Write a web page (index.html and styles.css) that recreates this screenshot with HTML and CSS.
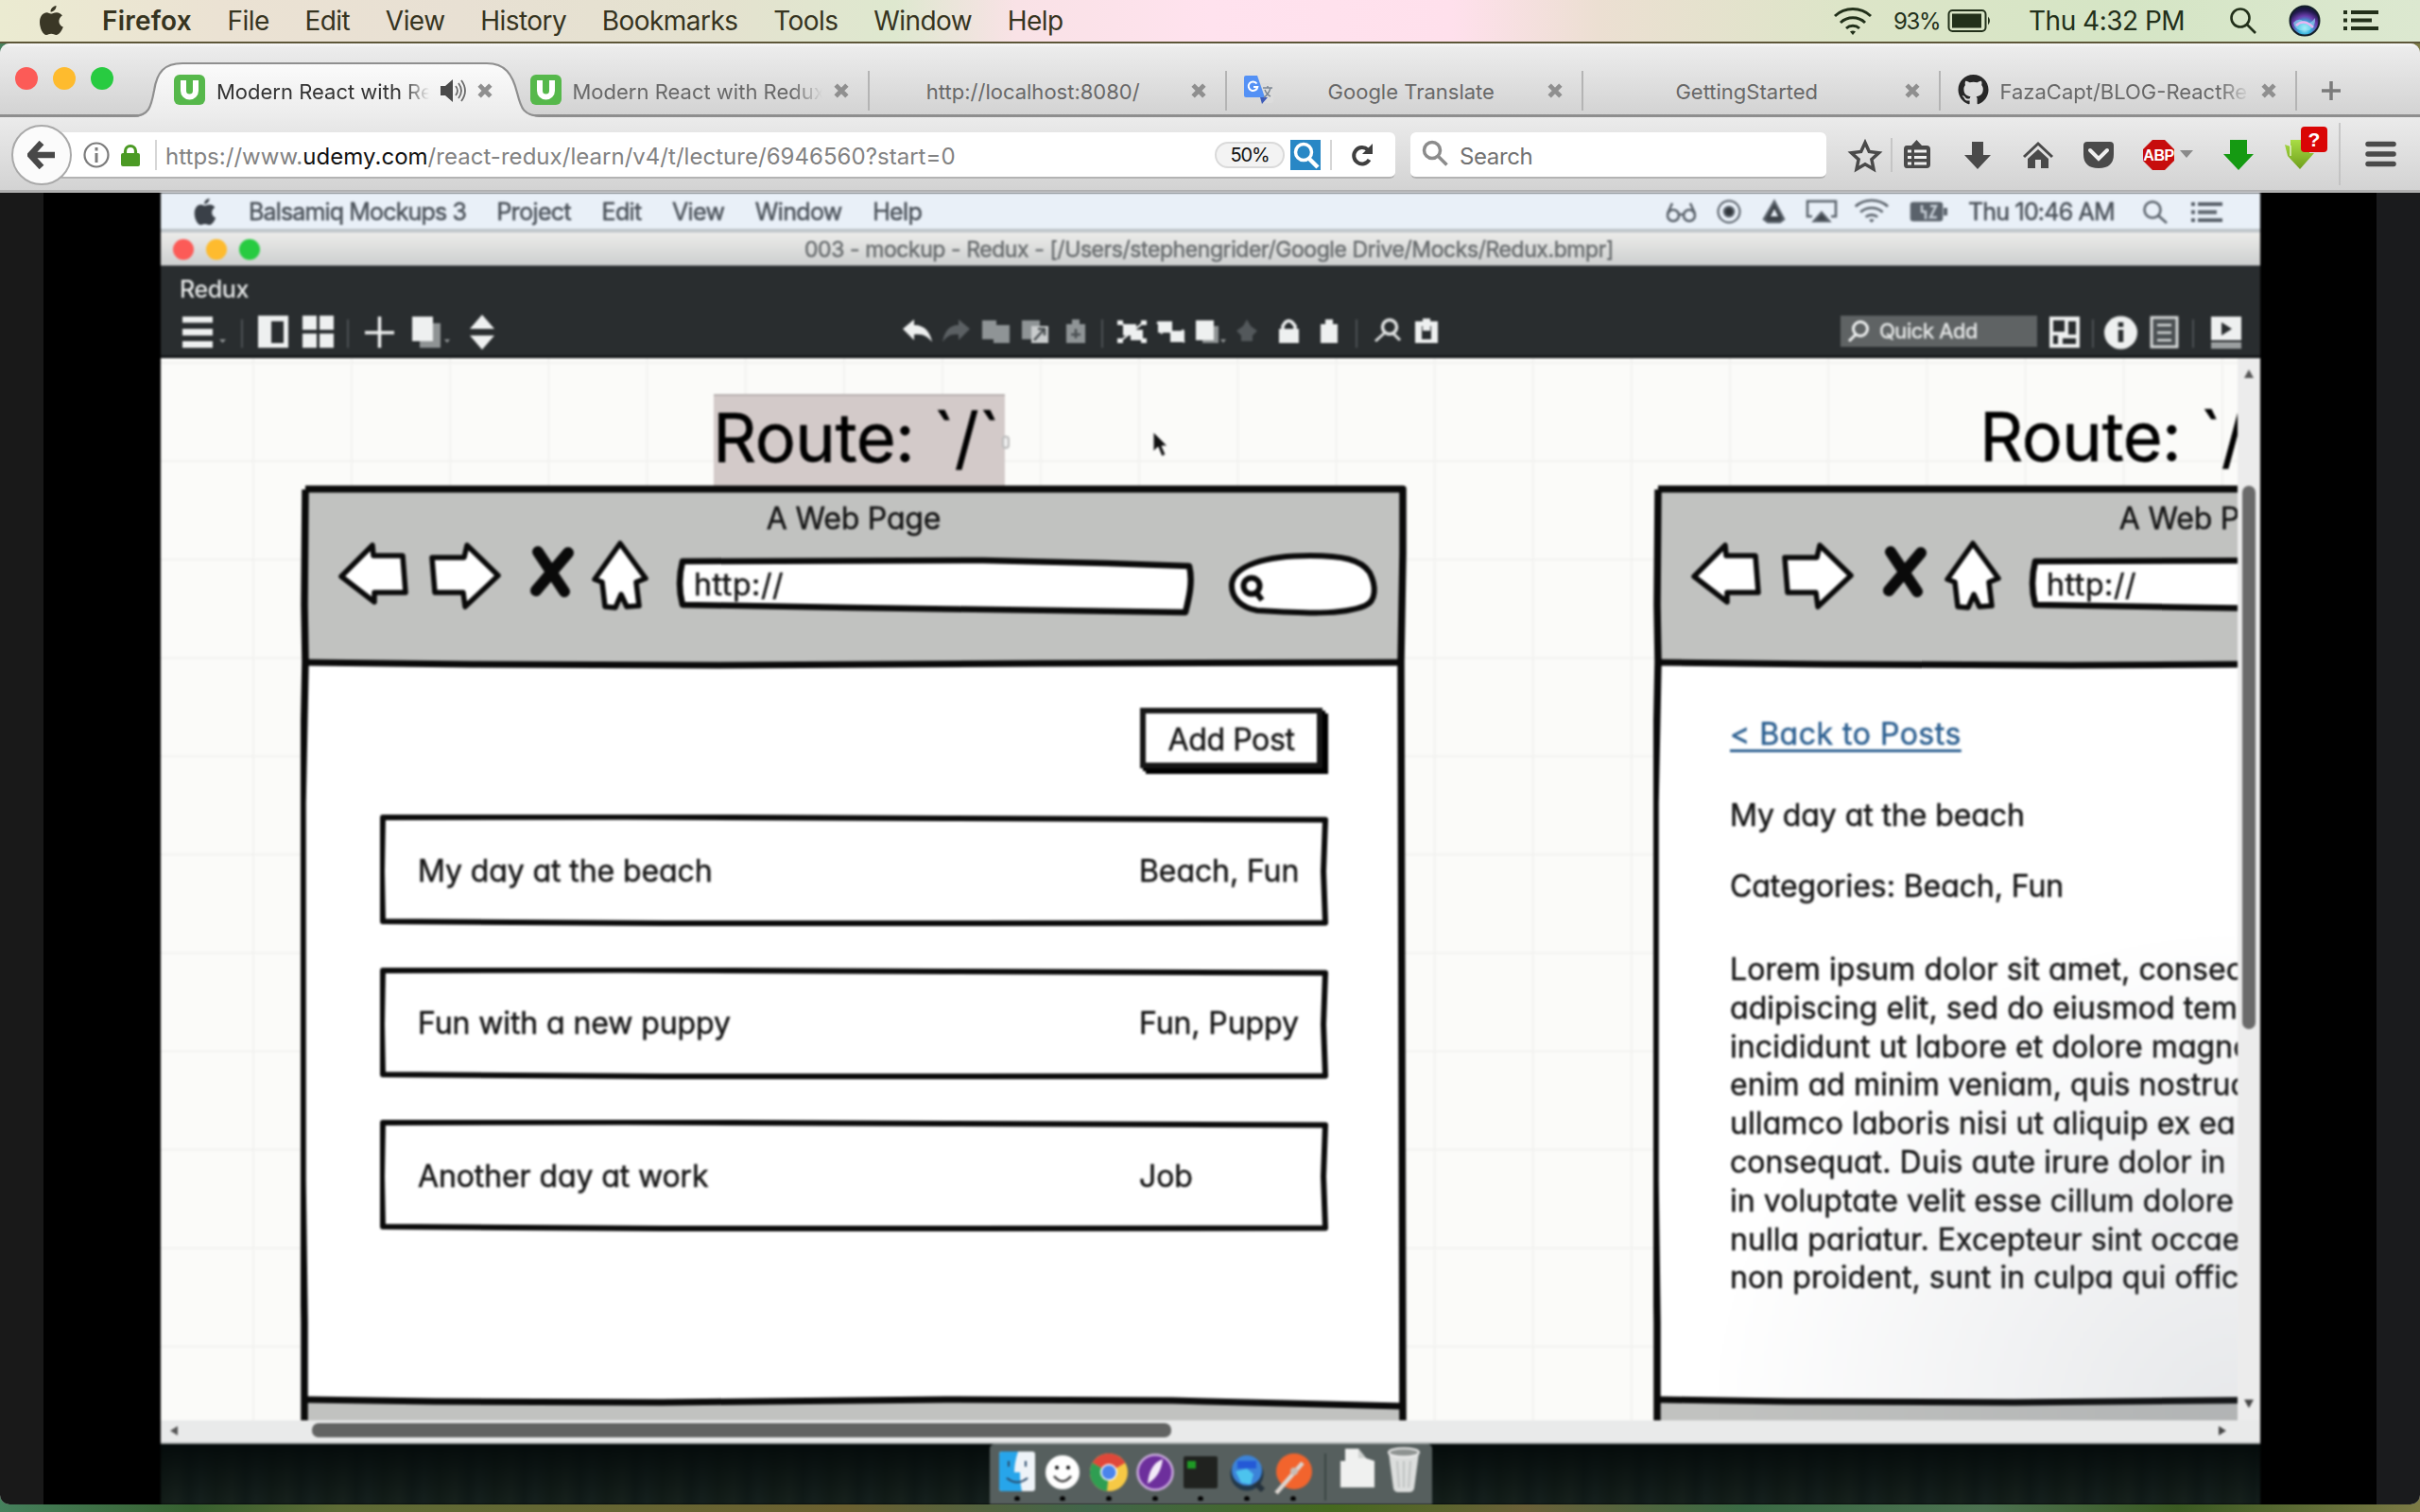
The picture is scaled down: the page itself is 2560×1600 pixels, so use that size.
FILE: index.html
```html
<!DOCTYPE html>
<html lang="en">
<head>
<meta charset="utf-8">
<title>Modern React with Redux</title>
<link rel="stylesheet" href="styles.css">
</head>
<body>
<svg class="defs" aria-hidden="true">
  <defs>
    <path id="apple" d="M17.5 0c.4 3-2.600 6.600-6 6.600C11.200 3.500 14.200.5 17.500 0zM11.600 8.600c1.700 0 3.300-1.400 6.300-1.400 2.600 0 4.700 1.300 6 3.200-5.200 3.100-4.300 10.100.9 12.200-1.600 4.500-4.600 8.400-7.300 8.400-2 0-2.900-1.200-5.300-1.200-2.400 0-3.300 1.200-5.200 1.200C3.700 31 0 24 0 17.500 0 10.800 4 7.300 7.500 7.300c1.800 0 3.200 1.300 4.100 1.300z"/>
    <path id="close" d="M2 2l11 11M13 2L2 13" fill="none" stroke="#8f8f8f" stroke-width="4.500"/>
    <g id="udemy">
      <rect width="33" height="32" rx="6" fill="#56b84b"/>
      <path d="M10 6v11a6.500 6.500 0 0 0 13 0V6" fill="none" stroke="#fff" stroke-width="6"/>
    </g>
    <g id="wifi" fill="none" stroke="currentColor">
      <path d="M2 11a28 28 0 0 1 38 0M8 18a19 19 0 0 1 26 0M14 24a10.500 10.500 0 0 1 14 0" stroke-width="3"/>
      <path d="M18 27.500a5 5 0 0 1 6 0L21 31z" fill="currentColor" stroke="none"/>
    </g>
    <g id="card-sketch" fill="#fff" stroke="#0b0b0b" stroke-width="6" stroke-linejoin="round">
      <path d="M3 3L260 2.500 600 4 1000 5.500 998 60 1000 114.500 620 115 300 115 3 113 2 60z"/>
    </g>
    <g id="frame-art" stroke="#0a0a0a" stroke-width="7.500" fill="none" stroke-linejoin="round">
      <path d="M323 518H1484V1520H323z" fill="#fff" stroke="none"/>
      <path d="M323 518H1484V702H323z" fill="#c1c2c0" stroke="none"/>
      <path d="M323 1481L700 1484 1000 1481 1240 1482 1484 1490V1520H323z" fill="#c1c2c0" stroke="none"/>
      <path d="M323 517.500H1484L1484 585 1482 700 1484 1505M323 518L322 640 323 700 320 850 320 1250 322 1400V1505"/>
      <path d="M324 701L500 703 760 704 1100 702 1484 701M323 1481L460 1483 700 1484 1000 1481 1240 1482 1484 1488" stroke-width="7"/>
      <g fill="#fff" stroke-width="5.500">
        <path d="M361 610L394 577 395 588 426 588 429 627 396 627 396 637z"/>
        <path d="M457 590L491 590 494 577 527 609 492 642 490 627 460 627z"/>
        <path d="M656 575L683 612 673 616 676 641 663 642 657 629 651 643 640 642 637 616 629 613z"/>
        <path d="M722 594L1040 593 1170 596 1258 599C1262 615 1258 632 1254 648L1120 646 900 643 722 640C718 625 718 610 722 594z" stroke-width="6.500"/>
        <path d="M1303 620C1303 598 1340 588 1386 588 1420 588 1440 592 1449 606 1456 620 1456 636 1444 641 1420 651 1380 649 1330 646 1312 643 1303 632 1303 620z" stroke-width="6"/>
      </g>
      <path d="M569 584L597 626M601 585L567 625" stroke-width="12" stroke-linecap="round"/>
      <circle cx="1324" cy="620" r="8.500" stroke-width="6"/>
      <path d="M1329 627L1335 635" stroke-width="6"/>
    </g>
  </defs>
</svg>

<header class="menubar">
  <svg class="menubar-apple" viewBox="0 0 25 31" fill="#3a3726"><use href="#apple"/></svg>
  <nav class="menus">
    <b>Firefox</b><span>File</span><span>Edit</span><span>View</span><span>History</span><span>Bookmarks</span><span>Tools</span><span>Window</span><span>Help</span>
  </nav>
  <div class="status">
    <svg width="42" height="32" viewBox="0 0 42 32"><use href="#wifi"/></svg>
    <span class="battery-level">93%</span>
    <svg class="battery" width="48" height="26" viewBox="0 0 48 26"><rect x="1.500" y="2" width="39" height="22" rx="4" fill="none" stroke="currentColor" stroke-width="2"/><rect x="5" y="5.500" width="31" height="15" fill="currentColor"/><path d="M43 8.500q4 4.500 0 9z" fill="currentColor"/></svg>
    <span class="clock">Thu 4:32 PM</span>
    <svg class="spotlight" width="30" height="30" viewBox="0 0 30 30" fill="none" stroke="currentColor" stroke-width="2.600"><circle cx="12" cy="12" r="9.500"/><path d="M19 19l9 9"/></svg>
    <svg class="siri" width="34" height="34" viewBox="0 0 34 34"><defs><radialGradient id="siri-glow" cx=".5" cy=".75" r=".75"><stop offset="0" stop-color="#c9f6ff"/><stop offset=".28" stop-color="#36b5dd"/><stop offset=".55" stop-color="#6a3fae"/><stop offset=".8" stop-color="#22194f"/><stop offset="1" stop-color="#101430"/></radialGradient></defs><circle cx="17" cy="17" r="15.500" fill="url(#siri-glow)" stroke="#14202a" stroke-width="2"/><path d="M5 19q6-6 11-1t12-4q1 8-6 13H12q-6-2-7-8z" fill="#8fe6f5" opacity=".6"/><path d="M8 22q8-8 18 2" fill="none" stroke="#e7b5f3" stroke-width="2.500"/></svg>
    <svg width="37" height="22" viewBox="0 0 37 22" fill="currentColor"><path d="M0 0h4v4H0zM8 0h29v4H8zM0 8.500h4v4H0zM8 8.500h22v4H8zM0 17h4v4H0zM8 17h29v4H8z"/></svg>
  </div>
</header>

<main class="window">
  <div class="tabstrip">
    <div class="lights"><i class="red"></i><i class="yellow"></i><i class="green"></i></div>
    <div class="tab tab-active">
      <svg class="tab-shape" viewBox="140 64 436 62"><defs><linearGradient id="tab-fill" x2="0" y2="1"><stop offset="0" stop-color="#fbfbfb"/><stop offset="1" stop-color="#ebebeb"/></linearGradient></defs><path d="M140 126V124C158 124 160 112 163 96 166 76 174 67 193 67H515C534 67 542 78 547 98 551 114 553 124 574 124V126z" fill="url(#tab-fill)"/><path d="M140 123C158 123 160 112 163 96 166 76 174 67 193 67H515C534 67 542 78 547 98 551 114 553 123 574 123" fill="none" stroke="#8f8f8f" stroke-width="2.200"/></svg>
      <svg class="favicon" viewBox="0 0 33 32"><use href="#udemy"/></svg>
      <span class="tab-label fade">Modern React with Redux</span>
      <svg class="speaker" viewBox="0 0 27 24" fill="#4a4a4a"><path d="M0 7h5l8-7v24l-8-7H0z"/><path d="M16 7q4 5 0 10M19 4q6 8 0 16M22 1q8 11 0 22" fill="none" stroke="#6c6c6c" stroke-width="1.800"/></svg>
      <svg class="close" viewBox="0 0 15 15"><use href="#close"/></svg>
    </div>
    <div class="tab">
      <svg class="favicon" viewBox="0 0 33 32"><use href="#udemy"/></svg>
      <span class="tab-label fade">Modern React with Redux</span>
      <svg class="close" viewBox="0 0 15 15"><use href="#close"/></svg>
    </div>
    <div class="tab">
      <span class="tab-label">http://localhost:8080/</span>
      <svg class="close" viewBox="0 0 15 15"><use href="#close"/></svg>
    </div>
    <div class="tab">
      <svg class="favicon" viewBox="0 0 33 32"><path d="M14 9h15a2 2 0 0 1 2 2v17a2 2 0 0 1-2 2H19z" fill="#dcdcdc"/><path d="M17 24h8l-6 7z" fill="#3d5bb8"/><path d="M2 1h12l8 23H2a2 2 0 0 1-2-2V3a2 2 0 0 1 2-2z" fill="#5491f5"/><path d="M13.500 9.500a4.800 4.800 0 1 0 .8 3.500H10" fill="none" stroke="#fff" stroke-width="2"/><path d="M20 14h10M25 12v2M28 14q-2 7-7 10M22 16q2 5 6 7" fill="none" stroke="#7d8894" stroke-width="1.500"/></svg>
      <span class="tab-label">Google Translate</span>
      <svg class="close" viewBox="0 0 15 15"><use href="#close"/></svg>
    </div>
    <div class="tab">
      <span class="tab-label">GettingStarted</span>
      <svg class="close" viewBox="0 0 15 15"><use href="#close"/></svg>
    </div>
    <div class="tab">
      <svg class="favicon" viewBox="0 0 33 32"><path d="M16.500 0C7.500 0 .5 7 .5 16c0 7 4.500 13 11 15.200.8.200 1.100-.3 1.100-.8v-3c-4.500 1-5.400-1.900-5.400-1.900-.7-1.800-1.800-2.300-1.800-2.300-1.500-1 .1-1 .1-1 1.600.1 2.500 1.700 2.500 1.700 1.400 2.400 3.700 1.700 4.700 1.300.1-1 .6-1.700 1-2.100-3.600-.4-7.300-1.800-7.300-7.900 0-1.700.6-3.200 1.600-4.300-.2-.4-.7-2 .2-4.200 0 0 1.300-.4 4.400 1.600a15 15 0 0 1 8 0c3.100-2 4.400-1.600 4.400-1.600.9 2.200.3 3.800.2 4.200 1 1.100 1.600 2.600 1.600 4.300 0 6.100-3.700 7.500-7.300 7.900.6.500 1.100 1.500 1.100 3v4.300c0 .5.300 1 1.100.8C28 29 32.500 23 32.500 16c0-9-7-16-16-16z" fill="#272727"/></svg>
      <span class="tab-label fade">FazaCapt/BLOG-ReactRe</span>
      <svg class="close" viewBox="0 0 15 15"><use href="#close"/></svg>
    </div>
    <svg class="newtab" viewBox="0 0 22 22"><path d="M11 1v20M1 11h20" stroke="#7b7b7b" stroke-width="3.500"/></svg>
  </div>

  <div class="navbar">
    <div class="urlbar">
      <div class="back"><svg width="30" height="30" viewBox="0 0 30 30"><path d="M15 2L3 15l12 13M4 15h25" fill="none" stroke="#484848" stroke-width="6.500"/></svg></div>
      <svg class="info" width="28" height="28" viewBox="0 0 28 28"><circle cx="14" cy="14" r="12.500" fill="none" stroke="#7c7c7c" stroke-width="2.200"/><path d="M14 6v3.500M14 12v10" stroke="#7c7c7c" stroke-width="3"/></svg>
      <svg class="lock" width="20" height="24" viewBox="0 0 20 24"><path d="M4.500 12V8a5.500 5.500 0 0 1 11 0v4" fill="none" stroke="#4b9a24" stroke-width="3.200"/><rect y="10" width="20" height="14" rx="2" fill="#4b9a24"/></svg>
      <i class="rule"></i>
      <span class="url">https://www.<em>udemy.com</em>/react-redux/learn/v4/t/lecture/6946560?start=0</span>
      <span class="zoom">50%</span>
      <svg class="lens" width="32" height="32" viewBox="0 0 32 32"><rect width="32" height="32" fill="#2887c5"/><circle cx="14" cy="13" r="8.500" fill="none" stroke="#fff" stroke-width="3.500"/><path d="M20 20l9 9" stroke="#fff" stroke-width="4.500"/></svg>
      <i class="rule"></i>
      <svg class="reload" width="24" height="26" viewBox="0 0 24 26"><path d="M18 7.500A8.700 8.700 0 1 0 19.500 18" fill="none" stroke="#3f3f3f" stroke-width="4"/><path d="M23 1v11H12z" fill="#3f3f3f"/></svg>
    </div>
    <div class="searchbox">
      <svg width="28" height="28" viewBox="0 0 28 28" fill="none" stroke="#8c8c8c" stroke-width="3.500"><circle cx="11" cy="11" r="8.500"/><path d="M17.500 17.500l9 9"/></svg>
      <span>Search</span>
    </div>
    <svg class="actions" viewBox="1950 130 610 66">
      <defs><linearGradient id="lime" x2="0" y2="1"><stop offset="0" stop-color="#a9dd45"/><stop offset="1" stop-color="#6f9f1c"/></linearGradient></defs>
      <path d="M1973 151l4.300 9.500 10.200 1.200-7.600 7 2.100 10.300-9-5.200-9 5.200 2.100-10.300-7.600-7 10.200-1.200z" fill="none" stroke="#4a4a4a" stroke-width="3.500"/>
      <path d="M2001 146v36M2475 126v72" stroke="#bcbcbc" stroke-width="1.500"/>
      <path d="M2017 154h5l5.500-6 5.500 6h5q4 0 4 4v16q0 4-4 4h-21q-3 0-3-4v-16q0-4 3-4z" fill="#4a4a4a"/>
      <path d="M2018 160h4M2018 166.500h4M2018 173h4M2025 160h13M2025 166.500h13M2025 173h13" stroke="#efefef" stroke-width="3"/>
      <path d="M2086 150h12v14h8l-14 15-14-15h8z" fill="#4a4a4a"/>
      <path d="M2141 166l15-14 15 14" fill="none" stroke="#4a4a4a" stroke-width="3"/>
      <path d="M2145 168l11-10 11 10v10h-8v-9h-6v9h-8z" fill="#4a4a4a"/>
      <path d="M2208 150h24q4 0 4 4v9q0 15-16 15t-16-15v-9q0-4 4-4z" fill="#4a4a4a"/>
      <path d="M2211 159l9 9 9-9" fill="none" stroke="#efefef" stroke-width="4" stroke-linecap="round"/>
      <path d="M2277 148h13l10 10v12l-10 10h-13l-10-10v-12z" fill="#c70d0d"/>
      <text x="2283.500" y="170" text-anchor="middle" class="abp">ABP</text>
      <path d="M2306 159h14l-7 8z" fill="#8b8b8b"/>
      <path d="M2359 148h18v15h7l-16 17-16-17h7z" fill="#159a12"/>
      <path d="M2417 153l6 2v-7h20v14h5l-15 17-13-14z" fill="url(#lime)"/><path d="M2423 154v11" stroke="#e4efcf" stroke-width="1.500"/>
      <rect x="2434" y="134" width="28" height="27" rx="4" fill="#da0505"/>
      <text x="2448" y="155" text-anchor="middle" class="badge">?</text>
      <path d="M2505 152.500h27M2505 163h27M2505 173.500h27" stroke="#4a4a4a" stroke-width="5.500" stroke-linecap="round"/>
    </svg>
  </div>

  <div class="page">
    <div class="video">
      <div class="v-menubar">
        <svg class="v-apple" viewBox="0 0 25 31" fill="#3a4048"><use href="#apple"/></svg>
        <nav><span class="v-app">Balsamiq Mockups 3</span><span>Project</span><span>Edit</span><span>View</span><span>Window</span><span>Help</span></nav>
        <svg class="v-status" viewBox="1755 206 310 36" fill="none" stroke="#5a626b" stroke-width="2.500" color="#5a626b">
          <circle cx="1770" cy="227" r="6"/><circle cx="1787" cy="227" r="6"/><path d="M1764 225l5-11M1793 225l-5-11M1776 226h5"/>
          <circle cx="1829" cy="223" r="11.500" stroke-width="2"/><circle cx="1829" cy="223" r="5" fill="#30353a"/>
          <path d="M1877 212l10 19-4 3h-13l-4-3z" fill="#3b4147"/><path d="M1877 220l4 8h-8z" fill="#e9f0f8" stroke="none"/>
          <path d="M1917 228h-5v-16h30v16h-5"/><path d="M1927 224l8 9h-16z" fill="#3b4147"/>
          <g transform="translate(1961 208) scale(.9 .86)"><use href="#wifi"/></g>
          <rect x="2022" y="214" width="32" height="18" rx="2" fill="#5a626b"/><path d="M2058 219v8" stroke-width="4"/><path d="M2033 216v7h4v8M2042 217h6l-6 12h7" stroke="#c5cdd5"/>
        </svg>
        <span class="v-clock">Thu 10:46 AM</span>
        <svg class="v-tail" viewBox="2262 206 100 36" fill="none" stroke="#5a626b" stroke-width="2.500"><circle cx="2277" cy="221" r="8.500"/><path d="M2283 227l9 8"/><path d="M2318 215h4M2325 215h26M2318 223.500h4M2325 223.500h20M2318 232h4M2325 232h26" stroke-width="4"/></svg>
      </div>
      <div class="v-title">
        <div class="lights"><i class="red"></i><i class="yellow"></i><i class="green"></i></div>
        <span>003 - mockup - Redux - [/Users/stephengrider/Google Drive/Mocks/Redux.bmpr]</span>
      </div>
      <div class="v-toolbar">
        <div class="v-project">Redux</div>
        <div class="v-tools">
          <svg class="tools-left" viewBox="190 330 340 44" fill="#eef0f0">
            <path d="M193 335h32v6.500h-32zM193 348h32v7h-32zM193 361h32v7h-32z"/><path d="M232 359h7l-3.500 4z" fill="#8f9394"/>
            <path d="M256 338v30M368 338v30" stroke="#4b5053" stroke-width="2"/>
            <path d="M273 334h32v34h-32zM287 340v23h13v-23z" fill-rule="evenodd"/>
            <path d="M320 334h15v15h-15zM338 334h15v15h-15zM320 353h15v15h-15zM338 353h15v15h-15z"/>
            <path d="M386 352h31M401.500 335v33" stroke="#eef0f0" stroke-width="3.500"/>
            <path d="M444 342h22v26h-22zM470 359h6l-3 4z" fill="#8f9394"/><path d="M436 335h22v26h-22z"/>
            <path d="M497 348l13-15 13 15zM497 355h26l-13 15z"/>
          </svg>
          <svg class="tools-mid" viewBox="950 330 580 44" fill="#eef0f0">
            <path d="M955 348l12-10v6c12 0 17 8 19 18-5-6-9-9-19-8v6z"/>
            <path d="M1026 348l-12-10v6c-11 0-15 8-17 18 5-6 8-9 17-8v6z" fill="#5b6063"/>
            <g fill="#8f9496"><path d="M1039 339h15v20h-15z"/><path d="M1051 344h17v19h-17z"/><path d="M1081 339h19v20h-19z"/><path d="M1128 343h20v20h-20zM1134 338h8v5h-8z"/></g>
            <path d="M1091 345h18v18h-18z" fill="#c9cccd"/><path d="M1094 360l10-11M1098 348h7v7M1138 348v10M1133 354h10" stroke="#4a4f52" stroke-width="2.500" fill="none"/>
            <path d="M1166 338v30M1435 338v30" stroke="#4b5053" stroke-width="2"/>
            <path d="M1182 339h6v5h-6zM1207 339h6v5h-6zM1182 358h6v5h-6zM1207 358h6v5h-6zM1188 343h14v12h-14zM1196 349h13v11h-13z"/>
            <path d="M1185 341l25 20M1210 341l-25 20" stroke="#eef0f0" stroke-width="2"/>
            <path d="M1225 340h15v12h-15zM1238 350h15v12h-15z"/><path d="M1224 341l29 21M1238 341l-10 12M1252 349l-10 12" stroke="#eef0f0" stroke-width="2.500"/>
            <path d="M1272 345h17v18h-17zM1291 359h6l-3 4z" fill="#8f9394"/><path d="M1265 339h19v21h-19z"/>
            <path d="M1319 338l4 7 7 5-5 5v6h-12v-6l-5-5 7-5z" fill="#53585b"/>
            <path d="M1353 348h21v15h-21z"/><path d="M1357 350v-5q6-11 13 0v5" fill="none" stroke="#eef0f0" stroke-width="3.500"/>
            <path d="M1397 343h18v20h-18zM1402 338h8v6h-8z"/>
            <circle cx="1470" cy="346" r="7.500" fill="none" stroke="#dfe1e1" stroke-width="3.500"/><path d="M1465 352l-10 9M1474 353l7 7" stroke="#dfe1e1" stroke-width="3"/>
            <path d="M1497 340h24v23h-24zM1504 345v14h10v-14z" fill-rule="evenodd"/><path d="M1505 337h8v13h-8z"/>
          </svg>
          <div class="quickadd">
            <svg width="24" height="26" viewBox="0 0 24 26" fill="none" stroke="#eef0f0" stroke-width="3"><circle cx="14" cy="11" r="7.500"/><path d="M9 17l-7 7"/></svg>
            <span>Quick Add</span>
          </div>
          <svg class="tools-right" viewBox="2160 330 215 44" fill="#eef0f0">
            <path d="M2168 335h32v33h-32zM2172 339v12h12v-12zM2188 340v14h8v-14zM2172 355v9h5v-9zM2182 358v6h14v-6z" fill-rule="evenodd"/>
            <path d="M2214 338v30M2320 338v30" stroke="#4b5053" stroke-width="2"/>
            <circle cx="2243.500" cy="352" r="17.500"/><path d="M2243.500 341v5M2243.500 349v13" stroke="#292d2f" stroke-width="5.500"/>
            <path d="M2276 336h27v31h-27z" fill="#4b5053" stroke="#d5d8d8" stroke-width="3"/><path d="M2282 344h15M2282 352h15M2282 360h15" stroke="#d5d8d8" stroke-width="2.500"/>
            <path d="M2339 335h32v25h-32z"/><path d="M2350 341l11 7-11 7z" fill="#292d2f"/><path d="M2339 362h32v7h-32z" fill="#9b9fa0"/>
          </svg>
        </div>
      </div>

      <div class="workspace">
        <div class="canvas">
          <div class="route route-selected">Route: `/`<i class="handle"></i></div>
          <div class="route route-second">Route: `/</div>
          <svg class="pointer" viewBox="0 0 16 30"><path d="M1 1v21l5-5 4 10 4-2-4-9h6z" fill="#111" stroke="#fff" stroke-width="1"/></svg>

          <section class="frame frame-list">
            <svg class="frame-art" viewBox="318 513 1172 990"><use href="#frame-art"/></svg>
            <div class="frame-head"><div class="frame-title">A Web Page</div><div class="frame-url">http://</div></div>
            <div class="frame-body posts">
              <div class="add-post">Add Post</div>
              <div class="card"><svg viewBox="0 0 1004 118"><use href="#card-sketch"/></svg><span>My day at the beach</span><span>Beach, Fun</span></div>
              <div class="card"><svg viewBox="0 0 1004 118"><use href="#card-sketch"/></svg><span>Fun with a new puppy</span><span>Fun, Puppy</span></div>
              <div class="card"><svg viewBox="0 0 1004 118"><use href="#card-sketch"/></svg><span>Another day at work</span><span>Job</span></div>
            </div>
          </section>

          <section class="frame frame-detail">
            <svg class="frame-art" viewBox="318 513 1172 990"><use href="#frame-art"/></svg>
            <div class="frame-head"><div class="frame-title">A Web Page</div><div class="frame-url">http://</div></div>
            <div class="frame-body detail">
              <a class="back-link">&lt; Back to Posts</a>
              <div class="post-title">My day at the beach</div>
              <div class="post-cats">Categories: Beach, Fun</div>
              <p>Lorem ipsum dolor sit amet, consec<br>adipiscing elit, sed do eiusmod tem<br>incididunt ut labore et dolore magna<br>enim ad minim veniam, quis nostrud<br>ullamco laboris nisi ut aliquip ex ea<br>consequat. Duis aute irure dolor in<br>in voluptate velit esse cillum dolore<br>nulla pariatur. Excepteur sint occae<br>non proident, sunt in culpa qui offic</p>
            </div>
          </section>
        </div>
        <div class="vscroll"><i class="arrow-up"></i><i class="vthumb"></i><i class="arrow-down"></i></div>
      </div>
      <div class="hscroll"><i class="arrow-left"></i><i class="hthumb"></i><i class="arrow-right"></i></div>

      <div class="desk">
        <div class="dock">
          <svg viewBox="0 0 40 60"><rect x="1" y="8" width="38" height="42" rx="3" fill="#eef3f8"/><path d="M4 8h17q-4 12-4 22h6q0 12 2 20H4q-3 0-3-3V11q0-3 3-3z" fill="#27a5ea"/><path d="M11 18v6M29 18v6M9 36q11 9 22 0" stroke="#2a4a6a" stroke-width="2" fill="none"/><circle cx="20" cy="58" r="2.800"/></svg>
          <svg viewBox="0 0 40 60"><circle cx="20" cy="30" r="18" fill="#fff"/><circle cx="14" cy="25" r="2"/><circle cx="26" cy="25" r="2"/><path d="M11 34q9 11 18 0" stroke="#444" stroke-width="2.500" fill="none"/><circle cx="20" cy="58" r="2.800"/></svg>
          <svg viewBox="0 0 40 60"><circle cx="20" cy="30" r="20" fill="#f6c945"/><path d="M20 30L2.700 20A20 20 0 0 1 37.300 20z" fill="#e0473a"/><path d="M20 30L2.700 20A20 20 0 0 0 18 50z" fill="#2f9e52"/><circle cx="20" cy="30" r="9" fill="#fff"/><circle cx="20" cy="30" r="7.500" fill="#4a84ec"/><circle cx="20" cy="58" r="2.800"/></svg>
          <svg viewBox="0 0 40 60"><circle cx="20" cy="30" r="18.500" fill="#6d2f9c" stroke="#c9a9dd" stroke-width="2.500"/><path d="M28 16q-14 5-16 26 14-8 16-26z" fill="#f3eaf8"/><circle cx="20" cy="58" r="2.800"/></svg>
          <svg viewBox="0 0 40 60"><rect x="2" y="13" width="36" height="34" rx="2" fill="#20221f"/><path d="M6 18h9v8H6z" fill="#1f9a25"/><circle cx="20" cy="58" r="2.800"/></svg>
          <svg viewBox="0 0 40 60"><circle cx="20" cy="32" r="17.500" fill="#22384a"/><path d="M28 40l9 9" stroke="#26323c" stroke-width="6"/><circle cx="20" cy="28" r="16" fill="#3c83d8"/><path d="M10 18h20v8H10z" fill="#2459d6"/><path d="M8 29l12-3 7 6-3 11-10-2z" fill="#4cc3ee"/><circle cx="20" cy="58" r="2.800"/></svg>
          <svg viewBox="0 0 40 60"><circle cx="21" cy="29" r="19" fill="#f2642d"/><path d="M2 52l14-16 14-16" stroke="#dcd5d0" stroke-width="4.500"/><circle cx="21" cy="29" r="4" fill="#c9bdb5"/><circle cx="20" cy="58" r="2.800"/></svg>
          <i class="dock-sep"></i>
          <svg viewBox="0 0 40 60"><path d="M2 18h5V5h14l8 10 9 3v28H2z" fill="#f0f1f0"/><path d="M21 5l8 10h-8z" fill="#cfd2d0"/></svg>
          <svg viewBox="0 0 40 60"><path d="M4 9h32l-5 38q-1 4-5 4H14q-4 0-5-4z" fill="#dcdedd"/><ellipse cx="20" cy="9" rx="16" ry="4.500" fill="#8e9391" stroke="#ededed" stroke-width="2"/><path d="M13 18l2 28M20 18v28M27 18l-2 28" stroke="#bfc2c1" stroke-width="2"/></svg>
        </div>
      </div>
    </div>
  </div>
</main>
</body>
</html>
```
FILE: styles.css
```css
* { box-sizing: border-box; }
body {
  margin: 0;
  width: 2560px;
  height: 1600px;
  overflow: hidden;
  font-family: Inter, "Liberation Sans", sans-serif;
  background: linear-gradient(90deg, #45805c, #37602f 8%, #5e6b35 14%, #6b6030 35%, #41654a 45%, #46691f 55%, #6b6038 63%, #3a6a44 72%, #4c7150 82%, #3b5a22 90%, #7c7a45);
}
svg { display: block; flex: none; }
i { font-style: normal; }
.defs { position: absolute; width: 0; height: 0; }

/* macOS menu bar */
.menubar {
  display: flex;
  align-items: center;
  height: 46px;
  padding: 0 44px 0 42px;
  border-bottom: 2px solid #5d5638;
  color: #36341f;
  font-size: 28px;
  background: linear-gradient(90deg, #ebebd1, #ebe2d3 9%, #e8e0d3 19%, #e4e2cf 30%, #dee8cf 37%, #f9e2e6 42%, #ffe2ee 50%, #ffe0ec 60%, #ecdfd2 66%, #dde5c8 76%, #d5e5c5 88%, #dce8d0);
}
.menubar-apple { width: 25px; height: 31px; margin: -2px 41px 0 0; }
.menus { display: flex; gap: 37.700px; letter-spacing: -.55px; }
.menus b { font-weight: 600; letter-spacing: .2px; }
.status { display: flex; align-items: center; margin-left: auto; color: #22301a; }
.battery-level { margin-left: 22px; font-size: 24px; letter-spacing: -1.400px; width: 50px; }
.battery { margin-left: 7px; }
.clock { margin-left: 38px; letter-spacing: -.5px; width: 166px; }
.spotlight { margin-left: 46px; }
.siri { margin: 0 24px 0 33px; }

/* Firefox window */
.window {
  display: flex;
  flex-direction: column;
  height: 1546px;
  border-radius: 10px;
  overflow: hidden;
  background: #d3d3d3;
}
.tabstrip {
  position: relative;
  display: flex;
  align-items: center;
  height: 78px;
  padding-top: 24px;
  border-bottom: 3px solid #8e8e8e;
  background: linear-gradient(#fafafa, #ececec 4px, #d3d3d3);
}
.lights { display: flex; gap: 16px; }
.lights i { width: 24px; height: 24px; border-radius: 50%; }
.lights .red { background: #fc5b57; }
.lights .yellow { background: #febb2e; }
.lights .green { background: #28cb41; }
.tabstrip .lights { width: 149px; margin: -26px 0 0 16px; }
.tab {
  position: relative;
  display: flex;
  align-items: center;
  gap: 12px;
  flex: none;
  width: 377.500px;
  height: 42px;
  padding: 0 20px 0 18px;
  border-right: 2px solid #b4b4b4;
  color: #686868;
  font-size: 22px;
}
.tab-active { border-color: transparent; color: #333; padding-left: 19px; }
.tab > * { position: relative; }
.tab > .tab-shape { position: absolute; left: -25px; top: -11px; width: 436px; height: 62px; }
.favicon { width: 33px; height: 32px; margin-top: -2px; }
.tab-label { flex: 1; overflow: hidden; white-space: nowrap; text-align: center; line-height: 30px; margin-top: 3px; }
.fade { text-align: left; -webkit-mask-image: linear-gradient(90deg, #000 88%, transparent); mask-image: linear-gradient(90deg, #000 88%, transparent); }
.speaker { width: 27px; height: 24px; }
.close { width: 16px; height: 16px; }
.newtab { width: 22px; height: 22px; margin-left: 25px; }

.navbar {
  display: flex;
  height: 80px;
  padding: 16px 0 0 13px;
  border-bottom: 3px solid #b0b0b0;
  background: linear-gradient(#ebebeb, #d3d3d3);
}
.urlbar, .searchbox {
  display: flex;
  align-items: center;
  height: 49px;
  background: #fff;
  border-bottom: 2px solid #b3b3b3;
  border-radius: 6px;
  font-size: 24px;
}
.urlbar { width: 1416px; margin-left: 47px; }
.back {
  display: grid;
  place-items: center;
  width: 64px;
  height: 64px;
  flex: none;
  margin-left: -48px;
  border: 2px solid #a9a9a9;
  border-radius: 50%;
  background: #fbfbfb;
}
.info { margin-left: 12px; }
.lock { margin-left: 12px; }
.rule { width: 2px; height: 32px; margin-left: 16px; background: #d6d6d6; }
.url { width: 1110px; margin: 3px 0 0 9px; color: #828282; letter-spacing: .03px; }
.url em { font-style: normal; color: #111; }
.zoom { width: 74px; height: 28px; border-radius: 14px; border: 2px solid #dadada; background: #f3f3f3; color: #111; font-size: 20px; line-height: 25px; letter-spacing: -1.200px; text-align: center; }
.lens { margin-left: 6px; }
.lens + .rule { margin-left: 10px; }
.reload { margin-left: 20px; }
.searchbox { width: 440px; margin-left: 16px; padding: 3px 0 0 12px; gap: 12px; color: #717171; letter-spacing: -.4px; }
.searchbox svg { margin-top: -6px; }
.actions { width: 610px; height: 66px; margin: -10px 0 0 18px; }
.abp { font: 700 16px "Liberation Sans", sans-serif; fill: #fff; letter-spacing: -.5px; }
.badge { font: 700 21px "Liberation Sans", sans-serif; fill: #fff; }

/* Lecture page */
.page { flex: 1; display: flex; background: linear-gradient(90deg, #191919 46px, #000 46px 2514px, #1a1b1d 2514px); }
.video { display: flex; flex-direction: column; width: 2221px; height: 1388px; margin-left: 170px; overflow: hidden; filter: blur(1.100px); background: #081010; }

.v-menubar { display: flex; align-items: center; height: 42px; padding: 1px 29px 0 35px; border-bottom: 4px solid #bfc5c9; background: #e9f0f8; color: #4b525a; font-size: 25px; letter-spacing: -.65px; -webkit-text-stroke: .5px; }
.v-apple { width: 24px; height: 28px; margin: 1px 34px 0 0; }
.v-menubar nav { display: flex; gap: 32.500px; }
.v-app { letter-spacing: -.85px; }
.v-status { width: 310px; height: 36px; margin: 2px 17px 0 auto; }
.v-clock { width: 155px; white-space: nowrap; letter-spacing: -.8px; }
.v-tail { width: 100px; height: 36px; margin: 2px 0 0 25px; }

.v-title { display: flex; align-items: center; height: 35px; padding-left: 13px; background: linear-gradient(#ececea, #cdcfcf); color: #666a6c; font-size: 23px; letter-spacing: -.43px; -webkit-text-stroke: .4px; }
.v-title .lights { gap: 13px; width: 668px; }
.v-title .lights i { width: 22px; height: 22px; }

.v-toolbar { height: 98px; padding: 10px 0 0 20px; background: #292d2f; border-bottom: 3px solid #15181a; }
.v-project { height: 30px; line-height: 30px; color: #e6e8e8; font-size: 25px; font-weight: 500; letter-spacing: -.4px; font-feature-settings: "cv11"; }
.v-tools { display: flex; margin-top: 9px; height: 44px; }
.tools-left { width: 340px; height: 44px; }
.tools-mid { width: 580px; height: 44px; margin-left: 420px; }
.quickadd { display: flex; align-items: center; gap: 10px; width: 208px; height: 33px; margin: 4px 5px 0 417px; padding: 0 0 2px 7px; background: #5f6364; color: #e4e6e6; font-size: 22px; letter-spacing: -.46px; -webkit-text-stroke: .5px; }
.tools-right { width: 215px; height: 44px; }

.workspace { display: flex; height: 1124px; }
.canvas {
  position: relative;
  width: 2197px;
  overflow: hidden;
  color: #161616;
  font-size: 32px;
  font-feature-settings: "cv11";
  -webkit-text-stroke: .5px;
  background:
    linear-gradient(90deg, #f2f2f0 2px, transparent 2px) 97px 0 / 104.150px 100%,
    linear-gradient(#f2f2f0 2px, transparent 2px) 0 108px / 100% 104.100px,
    #fbfbf9;
}
.canvas::after { content: ""; position: absolute; inset: 0; background: radial-gradient(ellipse 560px 520px at 100% 100%, rgba(90, 100, 115, .15), transparent); }
.route { position: absolute; top: 38px; height: 97px; line-height: 87px; font-size: 72px; letter-spacing: -.55px; color: #000; white-space: pre; }
.route-selected { left: 585px; width: 308px; background: #d3cac9; border-top: 2px solid #b9b2b1; text-indent: -1px; }
.route-second { left: 1924px; line-height: 90px; }
.handle { position: absolute; right: -5px; top: 42px; width: 8px; height: 14px; border: 2px solid #bbb; border-radius: 4px; background: #eee; }
.pointer { position: absolute; left: 1049px; top: 77px; width: 16px; height: 30px; }

.frame { position: absolute; top: 134px; width: 1172px; height: 990px; }
.frame-list { left: 148px; }
.frame-detail { left: 1579px; }
.frame-art { position: absolute; inset: 0; width: 1172px; height: 990px; }
.frame-head { position: relative; height: 193px; padding-top: 16px; line-height: 40px; }
.frame-title { text-align: center; letter-spacing: -.2px; margin-left: -2px; }
.frame-url { margin: 30px 0 0 416px; letter-spacing: .6px; }
.frame-body { position: relative; display: flex; flex-direction: column; }
.posts { padding: 43px 84px 0 84px; }
.add-post { width: 193px; height: 64px; align-self: flex-end; margin-right: 7px; padding-top: 2px; border: 6px solid #161616; background: #fff; box-shadow: 3px 3px 0 #000, 6px 6px 0 #000; text-align: center; line-height: 52px; letter-spacing: -.38px; }
.card { position: relative; display: grid; grid-template-columns: 763px 1fr; align-items: center; height: 118px; padding-left: 40px; margin-bottom: 43.500px; letter-spacing: -.1px; }
.add-post + .card { margin-top: 49px; }
.card svg { position: absolute; inset: 0; width: 1004px; height: 118px; }
.card span { position: relative; }
.detail { padding: 50px 0 0 81px; line-height: 41px; white-space: nowrap; letter-spacing: -.08px; }
.back-link { color: #2d6091; letter-spacing: .5px; text-decoration: underline; text-decoration-thickness: 3px; text-underline-offset: 5px; align-self: flex-start; }
.post-title { margin-top: 45px; }
.post-cats { margin-top: 34px; }
.detail p { margin: 48px 0 0; line-height: 40.800px; letter-spacing: .07px; }

.vscroll { display: flex; flex-direction: column; align-items: center; width: 24px; padding-top: 12px; background: #ececec; }
.vthumb { width: 14px; height: 575px; margin-top: 114px; border-radius: 7px; background: #6a6a6a; }
.arrow-up { border: 5px solid transparent; border-top: 0; border-bottom: 9px solid #555; }
.arrow-down { margin: 392px 0 0; border: 5px solid transparent; border-bottom: 0; border-top: 9px solid #444; }
.hscroll { display: flex; align-items: center; height: 25px; padding: 0 36px 2px 10px; background: #e9eaea; border-bottom: 2px solid #b5baba; }
.hthumb { width: 909px; height: 15px; margin-left: 142px; border-radius: 7px; background: #626362; }
.arrow-left { border: 5px solid transparent; border-left: 0; border-right: 8px solid #555; }
.arrow-right { margin-left: auto; border: 5px solid transparent; border-right: 0; border-left: 8px solid #444; }

.desk { flex: 1; display: flex; justify-content: center; background: linear-gradient(rgba(4, 10, 10, .95), rgba(6, 12, 11, .3)), repeating-linear-gradient(91deg, #18241e 0, #1f2b25 17px, #16221f 31px, #1d2a27 43px, #18241e 59px); }
.dock { display: flex; align-items: flex-start; gap: 8.700px; width: 468px; padding: 0 9px; background: #565f5e; border-radius: 5px 5px 0 0; }
.dock svg { width: 40px; height: 60px; }
.dock-sep { width: 2px; height: 50px; margin: 10px 4px 0 5px; background: #3b4644; }
```
